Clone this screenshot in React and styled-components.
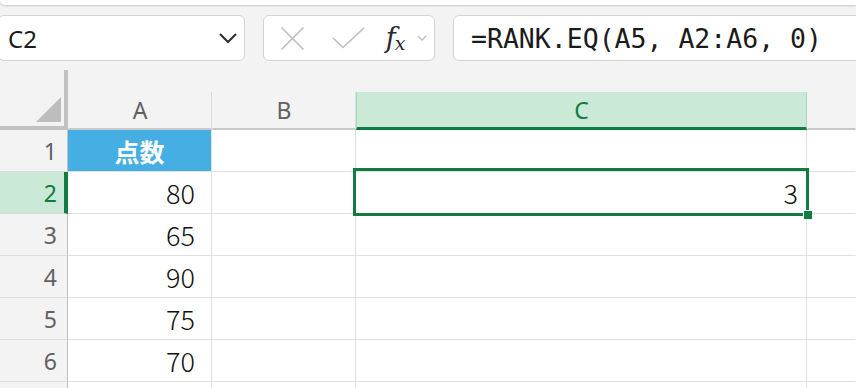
import styled, { createGlobalStyle } from "styled-components";

const GREEN = "#107c41";
const LIGHT_GREEN = "#cae9d6";
const GRID = "#e1e1e1";

const GlobalStyle = createGlobalStyle`
  html, body {
    margin: 0;
    padding: 0;
    background: #f3f3f3;
    overflow: hidden;
  }
`;

const Page = styled.div`
  width: 856px;
  height: 388px;
  overflow: hidden;
  background: #f3f3f3;
  font-family: "Noto Sans", "Liberation Sans", sans-serif;
`;

/* bottom edge of the ribbon */
const RibbonEdge = styled.div`
  height: 5px;
  background: #ffffff;
  border-radius: 0 0 0 8px;
  box-shadow: 0 1px 2px rgba(0, 0, 0, 0.18);
`;

const FormulaBar = styled.div`
  display: flex;
  align-items: center;
  gap: 18px;
  margin-top: 10px;
  margin-left: -2px;
  height: 46px;
`;

const Box = styled.div`
  box-sizing: border-box;
  height: 46px;
  background: #ffffff;
  border: 1px solid #d4d4d4;
  border-radius: 6px;
  display: flex;
  align-items: center;
  flex: none;
`;

const NameBox = styled(Box)`
  width: 247px;
  padding: 0 6px 0 9px;
  justify-content: space-between;
  font-size: 24px;
  color: #1b1b1b;
`;

const FuncBox = styled(Box)`
  width: 172px;
  padding-left: 16px;
`;

const FormulaBox = styled(Box)`
  flex: 1;
  margin-right: -20px;
  padding-left: 17px;
  font-family: "DejaVu Sans Mono", "Liberation Mono", monospace;
  font-size: 26.5px;
  color: #1b1b1b;
  white-space: nowrap;
`;

const IconSlot = styled.span`
  display: inline-flex;
  align-items: center;
  justify-content: center;
  width: ${(p) => p.$w}px;
  margin-right: ${(p) => p.$gap || 0}px;
`;

const Fx = styled.span`
  font-family: "DejaVu Serif", "Liberation Serif", serif;
  font-style: italic;
  font-size: 27px;
  color: #2a2a2a;
  line-height: 1;
  letter-spacing: -1px;
  sub {
    font-size: 19px;
    vertical-align: -3px;
  }
`;

const Sheet = styled.div`
  display: grid;
  grid-template-columns: 68px 144px 144px 451px 1fr;
  grid-template-rows: 60px repeat(7, 42px);
  margin-top: 9px;
`;

const Corner = styled.div`
  box-sizing: border-box;
  position: relative;
  border-right: 4px solid #c2c2c2;
  border-bottom: 4px solid #c2c2c2;
`;

const Triangle = styled.div`
  position: absolute;
  right: 3px;
  bottom: 4px;
  width: 25px;
  height: 25px;
  background: #bdbdbd;
  clip-path: polygon(100% 0, 100% 100%, 0 100%);
`;

const ColHead = styled.div`
  box-sizing: border-box;
  align-self: end;
  height: 38px;
  display: flex;
  align-items: center;
  justify-content: center;
  font-size: 23px;
  color: ${(p) => (p.$active ? GREEN : "#616161")};
  background: ${(p) => (p.$active ? LIGHT_GREEN : "transparent")};
  border-right: 1px solid ${(p) => (p.$last ? "transparent" : p.$active ? "#a8d8b9" : "#dcdcdc")};
  border-left: 1px solid ${(p) => (p.$active ? "#a8d8b9" : "transparent")};
  border-bottom: ${(p) => (p.$active ? `3px solid ${GREEN}` : "2px solid #c8c8c8")};
`;

const RowHead = styled.div`
  box-sizing: border-box;
  display: flex;
  align-items: center;
  justify-content: flex-end;
  font-size: 23px;
  color: ${(p) => (p.$active ? GREEN : "#616161")};
  background: ${(p) => (p.$active ? LIGHT_GREEN : "transparent")};
  border-right: ${(p) => (p.$active ? `4px solid ${GREEN}` : "1px solid #c2c2c2")};
  border-bottom: 1px solid #dcdcdc;
  padding-right: ${(p) => (p.$active ? 7 : 10)}px;
`;

const Cell = styled.div`
  box-sizing: border-box;
  position: relative;
  display: flex;
  align-items: center;
  justify-content: ${(p) => (p.$center ? "center" : "flex-end")};
  padding-right: ${(p) => p.$pad || 0}px;
  background: ${(p) => (p.$fill ? "#45aee3" : "#ffffff")};
  border-right: 1px solid ${(p) => (p.$last ? "transparent" : GRID)};
  border-bottom: 1px solid ${GRID};
  font-family: "Noto Sans CJK JP", "Noto Sans", sans-serif;
  font-weight: 300;
  font-size: 27px;
  color: #111111;
`;

const HeaderText = styled.span`
  font-family: "Noto Sans CJK JP", sans-serif;
  font-weight: 700;
  font-size: 25px;
  color: #ffffff;
`;

const Selection = styled.div`
  position: absolute;
  z-index: 2;
  left: -3px;
  top: -4px;
  right: -3px;
  bottom: -3px;
  border: 3px solid ${GREEN};
  pointer-events: none;
`;

const FillHandle = styled.div`
  position: absolute;
  z-index: 3;
  right: -6px;
  bottom: -6px;
  width: 8px;
  height: 8px;
  background: ${GREEN};
  border-left: 1px solid #ffffff;
  border-top: 1px solid #ffffff;
`;

const scores = [80, 65, 90, 75, 70];

function App() {
  return (
    <Page>
      <GlobalStyle />
      <RibbonEdge />
      <FormulaBar>
        <NameBox>
          <span>C2</span>
          <svg width="20" height="12" viewBox="0 0 20 12">
            <path d="M2 2 L10 10 L18 2" fill="none" stroke="#2b2b2b" strokeWidth="2" />
          </svg>
        </NameBox>
        <FuncBox>
          <IconSlot $w={25} $gap={27}>
            <svg width="25" height="25" viewBox="0 0 25 25">
              <path d="M1.5 1.5 L23.5 23.5 M23.5 1.5 L1.5 23.5" stroke="#bdbdbd" strokeWidth="1.6" fill="none" />
            </svg>
          </IconSlot>
          <IconSlot $w={33} $gap={18}>
            <svg width="33" height="22" viewBox="0 0 33 22">
              <path d="M1 11 L11 20.5 L32 1" stroke="#bdbdbd" strokeWidth="1.6" fill="none" />
            </svg>
          </IconSlot>
          <IconSlot $w={24} $gap={10}>
            <Fx>f<sub>x</sub></Fx>
          </IconSlot>
          <IconSlot $w={10}>
            <svg width="10" height="6" viewBox="0 0 10 6">
              <path d="M1 1 L5 5 L9 1" stroke="#bdbdbd" strokeWidth="1.3" fill="none" />
            </svg>
          </IconSlot>
        </FuncBox>
        <FormulaBox>=RANK.EQ(A5, A2:A6, 0)</FormulaBox>
      </FormulaBar>

      <Sheet>
        <Corner>
          <Triangle />
        </Corner>
        <ColHead>A</ColHead>
        <ColHead>B</ColHead>
        <ColHead $active>C</ColHead>
        <ColHead $last />

        <RowHead>1</RowHead>
        <Cell $fill $center>
          <HeaderText>点数</HeaderText>
        </Cell>
        <Cell />
        <Cell />
        <Cell $last />

        {scores.map((score, i) => (
          <Row key={i} n={i + 2} score={score} />
        ))}

        {/* row 7 is only a sliver at the bottom edge */}
        <RowHead />
        <Cell />
        <Cell />
        <Cell />
        <Cell $last />
      </Sheet>
    </Page>
  );
}

function Row({ n, score }) {
  const active = n === 2;
  return (
    <>
      <RowHead $active={active}>{n}</RowHead>
      <Cell $pad={16}>{score}</Cell>
      <Cell />
      <Cell $pad={8}>
        {active && "3"}
        {active && <Selection />}
        {active && <FillHandle />}
      </Cell>
      <Cell $last />
    </>
  );
}

export default App;
